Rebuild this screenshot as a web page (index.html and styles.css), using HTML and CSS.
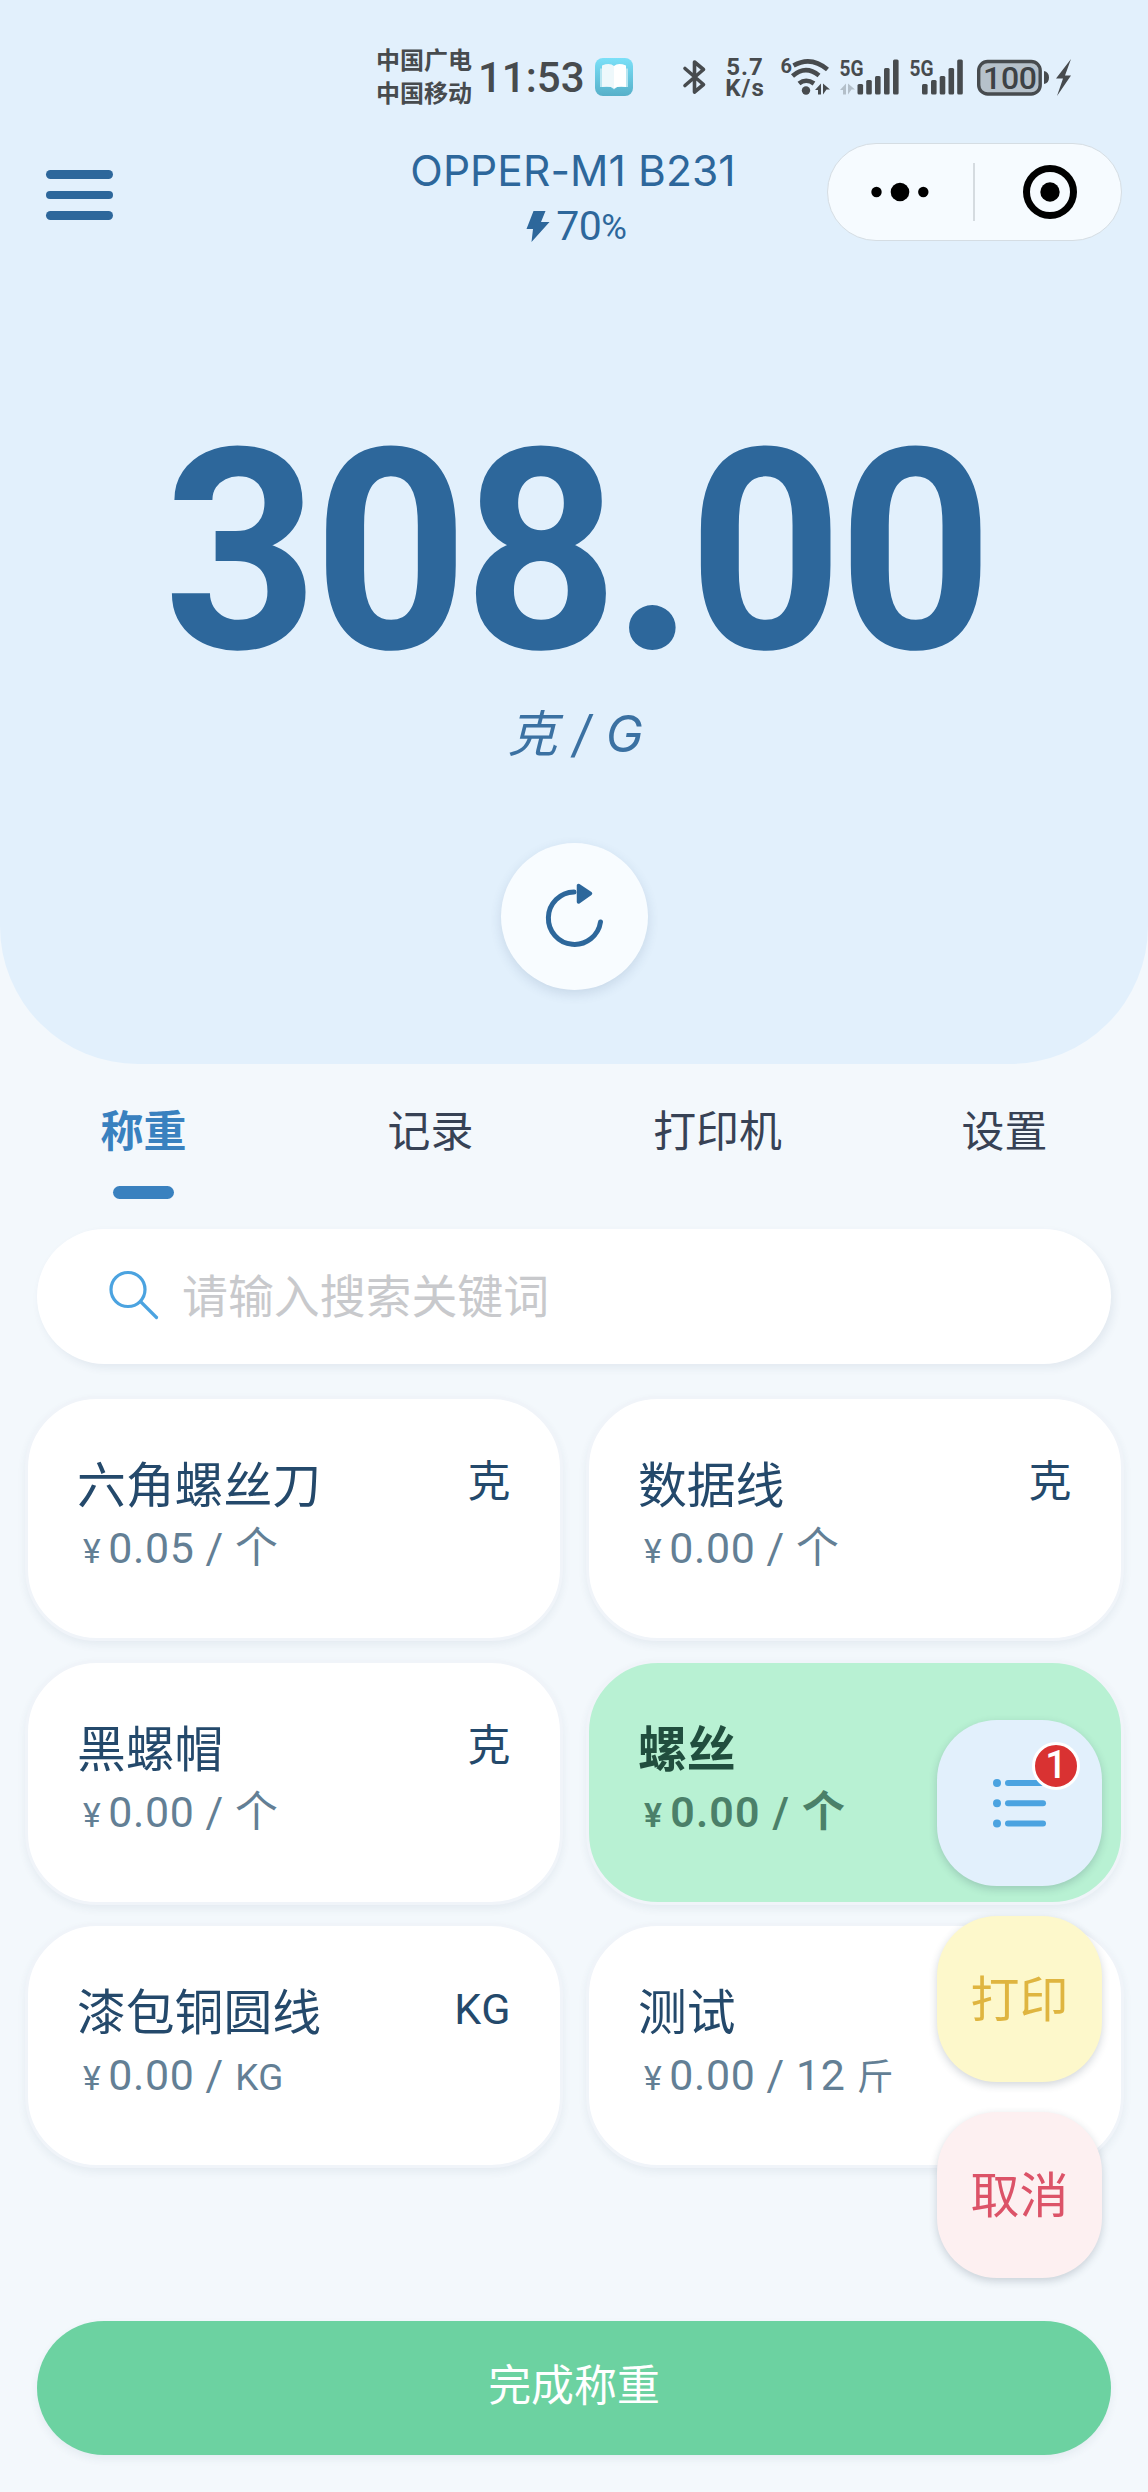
FILE: index.html
```html
<!DOCTYPE html>
<html lang="zh-CN">
<head>
<meta charset="utf-8">
<title>OPPER-M1 B231</title>
<link rel="stylesheet" href="styles.css">
</head>
<body>
<div class="app">
  <header class="hero">
    <div class="status">
      <div class="carriers"><span>中国广电</span><span>中国移动</span></div>
      <div class="clock">11:53</div>
      <svg class="book" width="38" height="38" viewBox="0 0 38 38">
        <defs><linearGradient id="sky" x1="0" y1="0" x2="0" y2="1"><stop offset="0" stop-color="#7be0f8"/><stop offset="1" stop-color="#57b0c9"/></linearGradient></defs>
        <rect width="38" height="38" rx="8" fill="url(#sky)"/>
        <path d="M5 10.500h28v18.500h-11l-3 2.500-3-2.500H5z" fill="#b9e6f1"/>
        <path d="M7 7.500q8-3 12 .5v22.500q-4-3-12-1.500z" fill="#eef8fb"/>
        <path d="M31 7.500q-8-3-12 .5v22.500q4-3 12-1.500z" fill="#fff"/>
      </svg>
      <svg class="bluetooth" width="24" height="36" viewBox="0 0 24 36" fill="none" stroke="#474b4e" stroke-width="3.600" stroke-linejoin="round" stroke-linecap="round"><path d="M2 9.500 20.500 25.500 11.500 33V3L20.500 10.500 2 26.500"/></svg>
      <div class="speed"><span>5.7</span><span>K/s</span></div>
      <svg class="wifi" width="52" height="40" viewBox="780 57 52 40">
        <text x="780.500" y="73" class="tiny">6</text>
        <g fill="none" stroke="#474b4e" stroke-width="4.600">
          <path d="M793.500 65.500Q811 55.500 827.500 69.500"/>
          <path d="M792.500 76Q805.500 64.500 819 75.500"/>
          <path d="M799 83.500Q806 78 814 83.500"/>
        </g>
        <circle cx="806" cy="90.500" r="4.200" fill="#474b4e"/>
        <path d="M815 90l6-6.500v11h-3V90zM823 83.500l7 6h-3.500l-3.500 5z" fill="#474b4e"/>
      </svg>
      <svg class="signal" width="60" height="40" viewBox="840 57 60 40">
        <text x="839.500" y="75.500" class="gen" textLength="24" lengthAdjust="spacingAndGlyphs">5G</text>
        <path d="M840 90l6-6.500v11h-3V90zM848 83.500l7 6h-3.500l-3.500 5z" fill="#b3bfc9"/>
        <g fill="#474b4e"><rect x="857.500" y="84" width="5.600" height="10.500" rx="1.500"/><rect x="866.200" y="80" width="5.600" height="14.500" rx="1.500"/><rect x="875" y="76" width="5.600" height="18.500" rx="1.500"/><rect x="884" y="68" width="5.600" height="26.500" rx="1.500"/><rect x="893" y="59.500" width="5.600" height="35" rx="1.500"/></g>
      </svg>
      <svg class="signal2" width="55" height="40" viewBox="910 57 55 40">
        <text x="909.500" y="75.500" class="gen" textLength="24" lengthAdjust="spacingAndGlyphs">5G</text>
        <g fill="#474b4e"><rect x="922" y="84" width="5.600" height="10.500" rx="1.500"/><rect x="931" y="80" width="5.600" height="14.500" rx="1.500"/><rect x="939.700" y="76" width="5.600" height="18.500" rx="1.500"/><rect x="948.500" y="68" width="5.600" height="26.500" rx="1.500"/><rect x="957.200" y="59.500" width="5.600" height="35" rx="1.500"/></g>
      </svg>
      <svg class="battery" width="96" height="40" viewBox="977 57 96 40">
        <rect x="978.700" y="61.500" width="61.500" height="32.500" rx="9" fill="#b6c1ca" stroke="#474b4e" stroke-width="3.400"/>
        <path d="M1044 71q5 1 5 6.500t-5 6.500z" fill="#474b4e"/>
        <text x="983" y="89" class="charge" textLength="54" lengthAdjust="spacing">100</text>
        <path d="M1071 59l-15 19.500h7l-6 17.500 14-20.500h-6z" fill="#474b4e"/>
      </svg>
    </div>

    <nav class="nav">
      <div class="menu"><i></i><i></i><i></i></div>
      <div class="device">
        <div class="device-name">OPPER-M1 B231</div>
        <div class="device-power">
          <svg width="24" height="33" viewBox="0 0 24 33" fill="#2d679b"><path d="M7.500 1h12l-4.500 11h8.500L5.500 32l1.500-13H.500z"/></svg>
          <span>70</span><small>%</small>
        </div>
      </div>
      <div class="capsule">
        <svg width="60" height="20" viewBox="0 0 60 20"><circle cx="6.500" cy="10" r="5.200"/><circle cx="30" cy="10" r="9.300"/><circle cx="53.300" cy="10" r="5.200"/></svg>
        <b></b>
        <svg width="54" height="54" viewBox="0 0 54 54"><circle cx="27" cy="27" r="23.500" fill="none" stroke="#000" stroke-width="7"/><circle cx="27" cy="27" r="9.700"/></svg>
      </div>
    </nav>

    <div class="weight">308<span>.</span>00</div>
    <div class="weight-unit">克 / G</div>
    <div class="reset">
      <svg width="64" height="68" viewBox="0 0 64 68" fill="none" stroke="#2d679b" stroke-linecap="round" stroke-linejoin="round"><path d="M58.500 39A26.200 26.200 0 1 1 32 9" stroke-width="5"/><path d="M36.500 2.500v16.500l12-8.500z" fill="#2d679b" stroke-width="3.500"/></svg>
    </div>
  </header>

  <div class="tabs">
    <div class="tab active">称重</div><div class="tab">记录</div><div class="tab">打印机</div><div class="tab">设置</div>
  </div>

  <div class="search">
    <svg width="50" height="50" viewBox="0 0 50 50" fill="none" stroke="#4ba3e0" stroke-width="3.200" stroke-linecap="round"><circle cx="19" cy="19.500" r="17"/><path d="M31.500 31.500 47.500 47.500"/></svg>
    <span>请输入搜索关键词</span>
  </div>

  <main class="goods">
    <section class="card"><div class="row"><h3>六角螺丝刀</h3><em>克</em></div><p><small>¥</small>0.05 / 个</p></section>
    <section class="card"><div class="row"><h3>数据线</h3><em>克</em></div><p><small>¥</small>0.00 / 个</p></section>
    <section class="card"><div class="row"><h3>黑螺帽</h3><em>克</em></div><p><small>¥</small>0.00 / 个</p></section>
    <section class="card picked"><div class="row"><h3>螺丝</h3></div><p><small>¥</small>0.00 / 个</p></section>
    <section class="card"><div class="row"><h3>漆包铜圆线</h3><em>KG</em></div><p><small>¥</small>0.00 / <span>KG</span></p></section>
    <section class="card"><div class="row"><h3>测试</h3></div><p><small>¥</small>0.00 / 12 <span>斤</span></p></section>
  </main>

  <div class="finish">完成称重</div>

  <aside class="floats">
    <div class="float list">
      <svg width="56" height="50" viewBox="0 0 56 50" fill="#4ba3e0"><circle cx="5" cy="5" r="4"/><rect x="13" y="2" width="41" height="6" rx="3"/><circle cx="5" cy="25.300" r="4"/><rect x="13" y="22.300" width="41" height="6" rx="3"/><circle cx="5" cy="45.600" r="4"/><rect x="13" y="42.600" width="41" height="6" rx="3"/></svg>
      <span class="badge">1</span>
    </div>
    <div class="float print">打印</div>
    <div class="float cancel">取消</div>
  </aside>
</div>
</body>
</html>
```
FILE: styles.css
```css
* { box-sizing: border-box; margin: 0; padding: 0; }
body { background: #f3f8fc; }
.app {
  position: relative;
  width: 1148px;
  height: 2492px;
  overflow: hidden;
  font-family: Roboto, "Noto Sans CJK SC", sans-serif;
  font-size: 42.9px;
}
svg { display: block; flex: none; overflow: visible; }
.hero {
  height: 1064px;
  padding-top: 43px;
  background: #e2f0fc;
  border-radius: 0 0 138px 138px;
  color: #2d679b;
}

/* phone status bar */
.status {
  display: flex;
  align-items: center;
  height: 68px;
  padding-left: 376px;
  color: #474b4e;
}
.carriers { display: flex; flex-direction: column; width: 97px; padding-top: 2px; font-size: 24px; line-height: 33px; font-weight: 700; }
.clock { width: 122px; padding: 2px 0 0 5px; font-size: 42px; font-weight: 500; line-height: 66px; }
.bluetooth { margin-left: 50px; }
.speed { display: flex; flex-direction: column; width: 42px; padding-top: 2px; margin-left: 17px; font: 700 24px/21px Roboto, sans-serif; letter-spacing: 1px; text-align: center; white-space: nowrap; }
.wifi { margin-left: 14px; }
.signal { margin-left: 8px; }
.signal2 { margin-left: 10px; }
.battery { margin-left: 12px; }
.tiny { font: 700 20px Roboto, sans-serif; fill: #474b4e; }
.gen { font: 700 22px Roboto, sans-serif; fill: #474b4e; }
.charge { font: 500 32px Roboto, sans-serif; fill: #3e4245; }

/* title row */
.nav {
  display: grid;
  grid-template-columns: 295px 1fr 295px;
  grid-template-rows: 98px;
  margin-top: 32px;
  padding: 0 26px;
  height: 98px;
}
.menu { display: flex; flex-direction: column; gap: 12.2px; padding: 27px 0 0 20px; }
.menu i { width: 67px; height: 8.500px; border-radius: 5px; background: #2d679b; }
.device { display: flex; flex-direction: column; align-items: center; white-space: nowrap; }
.device-name { margin-right: 2px; font: 400 42.5px/55px Inter, sans-serif; letter-spacing: .1px; }
.device-power { display: flex; align-items: center; height: 56px; margin-left: 5px; font-size: 41px; line-height: 56px; }
.device-power span { margin-left: 6px; letter-spacing: -.5px; }
.device-power small { font-size: 35px; padding-top: 4px; }
.capsule {
  display: flex;
  align-items: center;
  padding-left: 42px;
  border: 1px solid #d5dde3;
  border-radius: 49px;
  background: #f6fbff;
}
.capsule b { width: 2px; height: 58px; margin: 0 48px 0 43px; background: #d5dbe0; }

/* weight readout */
.weight {
  height: 284px;
  margin-top: 168px;
  padding-left: 4px;
  font-size: 281px;
  font-weight: 700;
  line-height: 262px;
  letter-spacing: -5px;
  text-align: center;
  white-space: nowrap;
  transform: scaleX(.96);
}
.weight span { display: inline-block; margin: 0 9px 0 7px; transform: scaleX(1.06); font-family: Lato, sans-serif; font-weight: 900; }
.weight-unit { height: 70px; margin-top: 6px; padding-left: 3px; font: italic 400 50px/71px Inter, "Noto Sans CJK SC", sans-serif; letter-spacing: .5px; text-align: center; opacity: .92; }
.reset {
  display: flex;
  align-items: center;
  justify-content: center;
  width: 147px;
  height: 147px;
  margin: 74px auto 0;
  border-radius: 50%;
  background: #f8fcff;
  box-shadow: 0 4px 12px rgba(40, 70, 110, .14);
}

.tabs { display: grid; grid-template-columns: repeat(4, 1fr); height: 165px; color: #374255; }
.tab { display: flex; flex-direction: column; align-items: center; padding-top: 38px; line-height: 60px; }
.tab.active { color: #3981bf; font-weight: 700; }
.tab.active::after { content: ""; width: 61px; height: 13px; margin-top: 24px; border-radius: 7px; background: #3981bf; }

.search {
  display: flex;
  align-items: center;
  height: 135px;
  margin: 0 37px;
  padding: 0 0 3px 72px;
  border-radius: 68px;
  background: #fff;
  color: #c8c9cc;
  font-size: 45.9px;
  box-shadow: 3px 4px 8px rgba(40, 70, 100, .08);
}
.search span { margin-left: 23px; padding-top: 3px; line-height: 60px; }

.goods { display: grid; grid-template-columns: 1fr 1fr; grid-auto-rows: 245px; gap: 18.6px 23px; margin: 32px 24px 0 25px; }
.card {
  padding: 55px 49px 0;
  border: 3px solid #f0f4f9;
  border-radius: 72px;
  background: #fff;
  color: #24496b;
  box-shadow: 0 4px 8px rgba(40, 70, 100, .07);
}
.row { display: flex; justify-content: space-between; height: 62px; line-height: 66px; }
.row h3 { font-size: 48.8px; font-weight: 400; }
.row em { font-style: normal; line-height: 57px; letter-spacing: .6px; }
.card p { padding-left: 6px; color: #637f95; line-height: 65px; letter-spacing: .6px; white-space: pre; }
.card small { margin-right: 7px; font-size: 33.7px; }
.card p span { font-size: 36.75px; }
.picked { background: #b8f1d3; color: #214e3e; }
.picked h3 { font-weight: 700; }
.picked p { color: #4b8069; font-weight: 600; letter-spacing: 1.2px; }

.finish {
  height: 134px;
  margin: 153px 37px 0;
  border-radius: 67px;
  background: #6cd2a1;
  color: #fff;
  line-height: 131px;
  text-align: center;
  box-shadow: 0 4px 8px rgba(40, 70, 100, .07);
}

/* buttons floating over the list */
.floats { position: absolute; top: 1720px; right: 46px; display: flex; flex-direction: column; gap: 30px; }
.float {
  position: relative;
  display: flex;
  align-items: center;
  justify-content: center;
  width: 165px;
  height: 166px;
  border-radius: 60px;
  font-size: 49px;
  line-height: 60px;
  box-shadow: 0 3px 8px rgba(30, 50, 70, .2);
}
.list { background: #e2f0fc; }
.print, .cancel { padding-top: 3px; }
.print { background: #fdf8cb; color: #dfb540; }
.cancel { background: #fdf0f1; color: #dc5368; }
.badge {
  position: absolute;
  top: 22px;
  left: 95px;
  width: 48px;
  height: 48px;
  border: 3px solid #fff;
  border-radius: 50%;
  background: #d93232;
  color: #fff;
  font-size: 38px;
  font-weight: 500;
  line-height: 40px;
  text-align: center;
}
```
